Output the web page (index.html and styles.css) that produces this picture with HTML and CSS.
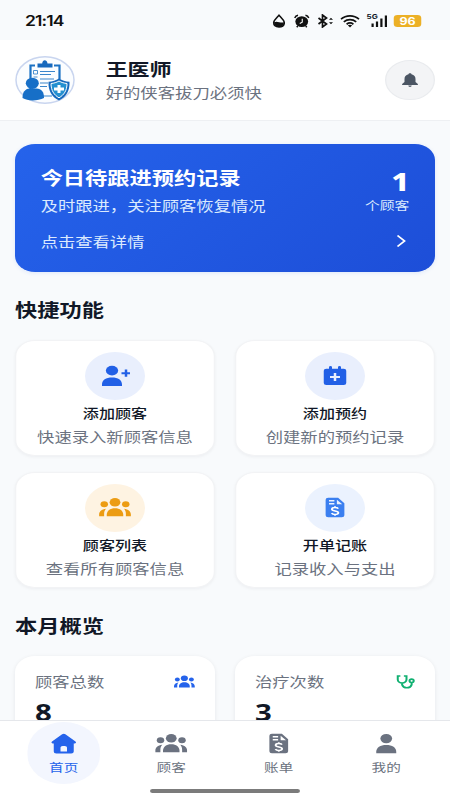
FILE: index.html
```html
<!DOCTYPE html>
<html lang="zh-CN">
<head>
<meta charset="utf-8">
<title>首页</title>
<link rel="stylesheet" href="styles.css">
</head>
<body>
<svg class="defs" width="0" height="0">
  <symbol id="group" viewBox="-1 0 26 24">
    <circle cx="12" cy="6.200" r="4.300"/><circle cx="3.400" cy="8.200" r="3"/><circle cx="20.600" cy="8.200" r="3"/>
    <path d="M5.400 20.300v-1.500c0-3.800 2.600-6.500 6.600-6.500s6.600 2.700 6.600 6.500v1.500z"/>
    <path d="M-.7 20.300v-1.800c0-3.100 1.900-5.400 5.500-5.800-1.200 1.500-1.500 3.200-1.500 5.400v2.200zM24.700 20.300v-1.800c0-3.100-1.900-5.400-5.500-5.800 1.200 1.500 1.500 3.200 1.500 5.400v2.200z"/>
  </symbol>
  <symbol id="bill" viewBox="0 0 24 24">
    <path fill-rule="evenodd" d="M6.500 1.800h8L19.500 7.300v11.900a2 2 0 0 1-2 2h-11a2 2 0 0 1-2-2V3.800a2 2 0 0 1 2-2zM7.200 4v1.500h4.300V4zM7.200 7.100v1.500h4.300V7.100zM13.500 3.800v4.500h4.300z"/>
    <path class="cut" d="M14.600 12.600c-.6-.9-1.500-1.100-2.600-1.100-1.500 0-2.500.6-2.500 1.700 0 2.500 5.200 1.100 5.200 3.600 0 1.100-1.100 1.700-2.700 1.700-1.200 0-2.200-.4-2.700-1.300M12 10.200v1.600M12 18.200v1.600"/>
  </symbol>
</svg>
<div class="phone">
  <div class="status">
    <span class="clock">21:14</span>
    <div class="status-icons">
      <svg class="drop" style="--w:13" viewBox="0 0 13 14" preserveAspectRatio="none"><path d="M6.500 1.200C4 4 1.200 6.300 1.200 8.600c0 2.700 2.300 4.300 5.300 4.300s5.300-1.600 5.300-4.300C11.800 6.300 9 4 6.500 1.200z" fill="none" stroke="#111" stroke-width="1.600"/><path d="M1.500 8.300c3-1.800 6 .9 10 0 0 3-2 4.500-5 4.500s-5-1.500-5-4.500z"/></svg>
      <svg style="--w:16" viewBox="0 0 16 14" preserveAspectRatio="none"><ellipse cx="8" cy="7.600" rx="6.400" ry="5.400"/><path d="M1 4c.5-1.500 1.700-2.500 3.300-2.800M15 4c-.5-1.500-1.700-2.500-3.300-2.800M4 12l-1 1.300M12 12l1 1.300" stroke="#111" stroke-width="1.500" fill="none"/><path d="M8.500 4.800v3.400L6 9.500" stroke="#fff" stroke-width="1.100" fill="none"/></svg>
      <svg style="--w:16" viewBox="0 0 16 14" preserveAspectRatio="none"><path d="M1 4l8 6-4 3V1l4 3-8 6" fill="none" stroke="#111" stroke-width="1.700"/><path d="M11.500 5.800l2-2 2 2zM11.500 8.200l2 2 2-2z"/></svg>
      <svg style="--w:20" viewBox="0 0 20 14" preserveAspectRatio="none"><path d="M1 5.200c5-4.400 13-4.400 18 0M3.800 7.800c3.600-3 8.800-3 12.400 0M6.600 10.200c2-1.500 4.800-1.500 6.800 0" fill="none" stroke="#111" stroke-width="1.700"/><path d="M7.800 11.300q2.200-1 4.400 0L10 13.400z"/></svg>
      <div class="signal"><span>5G</span><svg style="--w:20" viewBox="0 0 20 14" preserveAspectRatio="none"><path d="M4 9.500h2.200V13H4zM8.400 7.500h2.200V13H8.400zM12.800 4.500H15V13h-2.200zM17.300 1.500h2.200V13h-2.200z"/></svg></div>
      <div class="battery">96</div>
    </div>
  </div>

  <header class="header">
    <svg class="avatar" viewBox="0 0 60 48" preserveAspectRatio="none">
      <ellipse cx="30" cy="24" rx="29" ry="23.200" fill="#fbfdff" stroke="#c9d5ef" stroke-width="1.500"/>
      <path d="M20 9.500h-4.500v28M39 9.500h5.500v14" fill="none" stroke="#1c72c4" stroke-width="2.200"/>
      <path d="M22.500 11.500V7.500h4.700C27.500 3.300 32 3.300 32.500 7.500h5v4z" fill="#1769bd"/>
      <path d="M25 15.500h15M25 18.500h11M25 23h14M25 27h8M25 30.500h7M27 40h10" stroke="#3a86cc" stroke-width="1.100"/>
      <path d="M18.500 14.500h4v3.500h-4zM18.500 21h4" fill="none" stroke="#3a86cc" stroke-width=".9"/>
      <ellipse cx="17.300" cy="27.300" rx="6.500" ry="5.600" fill="#176fc7"/>
      <path d="M7.500 42c0-6 2.500-9 7-9.500h7c5 .5 7.500 3 7.500 9.500-6 3-16 3.500-21.500 0z" fill="#176fc7"/>
      <path d="M44 22.500c3 2 6.500 3 10.500 3.200C55 35 51 41 44 44.500 37 41 33 35 33.500 25.700 37.500 25.500 41 24.500 44 22.500z" fill="#1769bd"/>
      <path d="M44 25c2.500 1.500 5 2.200 8 2.500 0 7-3 11.500-8 14.300-5-2.800-8-7.300-8-14.300 3-.3 5.500-1 8-2.500z" fill="#2590d0" stroke="#fff" stroke-width="1"/>
      <path d="M42.500 29h3v2.500H49v3h-3.500V37h-3v-2.500H39v-3h3.500z" fill="#fff"/>
    </svg>
    <div class="who">
      <div class="name">王医师</div>
      <div class="motto">好的侠客拔刀必须快</div>
    </div>
    <div class="bell"><svg viewBox="0 0 16 16"><path d="M8 1.200c-.8 0-1.200.5-1.200 1C4.600 2.800 3.600 4.500 3.600 7v3L1.700 12v.9h12.600V12l-1.900-2V7c0-2.500-1-4.200-3.200-4.800 0-.5-.4-1-1.200-1zM6.600 13.500a1.400 1.400 0 0 0 2.800 0z"/></svg></div>
  </header>

  <main class="content">
    <section class="hero">
      <div class="hero-top">
        <div>
          <div class="hero-title">今日待跟进预约记录</div>
          <div class="hero-sub">及时跟进，关注顾客恢复情况</div>
        </div>
        <div class="hero-count"><div class="num">1</div><div class="unit">个顾客</div></div>
      </div>
      <div class="hero-link"><span>点击查看详情</span><svg viewBox="0 0 8 14"><path d="M1 1.500L6.600 7 1 12.500"/></svg></div>
    </section>

    <h2>快捷功能</h2>
    <div class="grid">
      <div class="card">
        <div class="disc blue"><svg viewBox="0 0 24 24"><circle cx="9.600" cy="6.600" r="4.900"/><path d="M1.600 22v-1.600c0-4.400 3.200-7 8-7s8 2.600 8 7V22zM19.800 5.600h2v2.600h2.600v2h-2.600v2.600h-2v-2.600h-2.600v-2h2.600z"/></svg></div>
        <div class="card-title">添加顾客</div><div class="card-desc">快速录入新顾客信息</div>
      </div>
      <div class="card">
        <div class="disc blue"><svg viewBox="0 0 24 24"><path fill-rule="evenodd" d="M5 4.700h2.200V3.300a1.200 1.200 0 0 1 2.400 0v1.400h4.800V3.300a1.200 1.200 0 0 1 2.400 0v1.400H19a2 2 0 0 1 2 2V19a2 2 0 0 1-2 2H5a2 2 0 0 1-2-2V6.700a2 2 0 0 1 2-2zM11 9v3H8v2h3v3h2v-3h3v-2h-3V9z"/></svg></div>
        <div class="card-title">添加预约</div><div class="card-desc">创建新的预约记录</div>
      </div>
      <div class="card">
        <div class="disc orange"><svg class="wide"><use href="#group"/></svg></div>
        <div class="card-title">顾客列表</div><div class="card-desc">查看所有顾客信息</div>
      </div>
      <div class="card">
        <div class="disc sky"><svg><use href="#bill"/></svg></div>
        <div class="card-title">开单记账</div><div class="card-desc">记录收入与支出</div>
      </div>
    </div>

    <h2>本月概览</h2>
    <div class="grid">
      <div class="stat">
        <div class="stat-head"><span>顾客总数</span><svg class="mini-group"><use href="#group"/></svg></div>
        <div class="stat-num">8</div>
      </div>
      <div class="stat">
        <div class="stat-head"><span>治疗次数</span><svg class="steth" viewBox="0 0 16 16"><path d="M4.300 2H2.200v3.500a3.500 3.500 0 0 0 7 0V2H7.100M5.700 9v1.800a3.900 3.900 0 0 0 7.600 0V8.700"/><circle cx="13.300" cy="6.800" r="1.700"/></svg></div>
        <div class="stat-num">3</div>
      </div>
    </div>
  </main>

  <nav class="nav">
    <div class="tabs">
      <div class="tab active"><svg viewBox="0 0 24 24"><path fill-rule="evenodd" d="M12 1.800c.5 0 .9.200 1.300.5l8.100 7.200c.8.800.4 1.900-.7 1.900H20v8a2 2 0 0 1-2 2H6a2 2 0 0 1-2-2v-8h-.7c-1.100 0-1.500-1.100-.7-1.900l8.100-7.200c.4-.3.800-.5 1.300-.5zM9.400 19.600h5.200v-4a1.700 1.700 0 0 0-1.700-1.700h-1.800a1.700 1.700 0 0 0-1.700 1.700z"/></svg><span>首页</span></div>
      <div class="tab"><svg class="wide"><use href="#group"/></svg><span>顾客</span></div>
      <div class="tab"><svg><use href="#bill"/></svg><span>账单</span></div>
      <div class="tab"><svg viewBox="0 0 24 24"><circle cx="12" cy="6.600" r="4.700"/><path d="M4 21.300v-1.500c0-4.200 3.200-6.700 8-6.700s8 2.500 8 6.700v1.500z"/></svg><span>我的</span></div>
    </div>
    <div class="home-bar"></div>
  </nav>
</div>
</body>
</html>
```
FILE: styles.css
```css
* { box-sizing: border-box; }
html, body { margin: 0; height: 800px; overflow: hidden; background: #f8fafc; }
.defs { position: absolute; }

/* 360-unit-wide layout stretched to the full 450px width */
.phone {
  width: 360px; height: 800px; overflow: hidden;
  display: flex; flex-direction: column;
  transform: scaleX(1.25); transform-origin: 0 0;
  font-family: "Noto Sans CJK SC", "Noto Sans", sans-serif;
  color: #111827;
}

.status { flex: none; height: 40px; padding: 1px 23px 0 20px; display: flex; align-items: center; justify-content: space-between; }
.clock { font: 600 14px/20px Inter, sans-serif; letter-spacing: -0.700px; color: #111; }
.status-icons { display: flex; align-items: center; gap: 5.800px; fill: #111; }
.status-icons svg { display: block; width: calc(var(--w) * 0.8px); height: 14px; }
.status-icons .drop { margin-right: 1.500px; }
.signal { position: relative; }
.signal span { position: absolute; left: -1px; top: -1px; font: 700 6.500px/8px Inter, sans-serif; }
.battery { width: 22px; height: 12px; border-radius: 3px; background: #ecb026; color: #fff; font: 700 10px/12px Inter, sans-serif; text-align: center; margin-left: -1px; }

.header { flex: none; height: 81px; padding: 0 12px; background: #fff; border-bottom: 1px solid #eef0f3; display: flex; align-items: center; }
.avatar { width: 48px; height: 48px; }
.who { flex: 1; margin-left: 24.500px; }
.name { font-size: 17.600px; line-height: 24px; font-weight: 600; position: relative; top: 1px; }
.motto { font-size: 13.900px; line-height: 24px; color: #6b7280; }
.bell { width: 40px; height: 40px; border-radius: 50%; background: #f3f4f6; border: 1px solid #e9ebee; display: grid; place-items: center; }
.bell svg { width: 16px; height: 16px; fill: #4b5563; }

.content { flex: 1; min-height: 0; overflow: hidden; padding: 23px 12px 0; }
.hero { height: 128px; border-radius: 16px; padding: 20px 20.500px 0; color: #fff; background: linear-gradient(135deg, #2563eb, #1d4ed8); box-shadow: 0 1px 4px rgba(37, 99, 235, .12); }
.hero-top { display: flex; justify-content: space-between; height: 63px; }
.hero-title { font-size: 17.800px; line-height: 27px; font-weight: 600; }
.hero-sub { font-size: 13.850px; line-height: 28px; color: #dbeafe; }
.hero-count { text-align: right; }
.num { font: 800 25px/34px "Noto Sans", sans-serif; }
.unit { font-size: 11.850px; line-height: 18px; margin-top: -2px; color: #dbeafe; }
.hero-link { display: flex; justify-content: space-between; align-items: center; font-size: 13.850px; line-height: 28px; color: #dbeafe; padding-right: 3px; }
.hero-link svg { width: 8px; height: 14px; fill: none; stroke: #fff; stroke-width: 1.600; }

h2 { margin: 24px 0 17px; font-size: 17.800px; line-height: 27px; font-weight: 600; }
.grid { display: grid; grid-template-columns: 1fr 1fr; gap: 16px; }
.card { height: 116px; border-radius: 16px; background: #fff; border: 1px solid #f2f3f5; box-shadow: 0 1px 3px rgba(15, 23, 42, .05); padding-top: 11px; display: flex; flex-direction: column; align-items: center; }
.disc { width: 48px; height: 48px; border-radius: 50%; display: grid; place-items: center; }
.disc svg, .tab svg { width: 24px; height: 24px; display: block; }
.disc svg.wide, .tab svg.wide { width: 26px; }
.blue { background: #e9effd; fill: #2260e6; }
.orange { background: #fef3e2; fill: #ec9c13; }
.sky { background: #ebf2fe; fill: #3b7ff0; }
.cut { fill: none; stroke: #fff; stroke-width: 1.500; }
.card-title { font-size: 12.850px; line-height: 22px; margin-top: 2px; font-weight: 500; }
.card-desc { font-size: 13.850px; line-height: 24px; color: #6b7280; white-space: nowrap; }

.stat { height: 110px; border-radius: 16px; background: #fff; box-shadow: 0 1px 4px rgba(15, 23, 42, .08); padding: 13px 16px 0; }
.stat-head { display: flex; justify-content: space-between; align-items: center; font-size: 13.850px; line-height: 24px; color: #6b7280; }
.mini-group { width: 17px; height: 16px; margin-top: 2px; fill: #2563eb; }
.steth { width: 16px; height: 16px; margin-top: 1px; fill: none; stroke: #10b071; stroke-width: 1.600; }
.stat-num { font: 700 23.500px/30px "Noto Sans", sans-serif; margin-top: 4px; }

.nav { flex: none; height: 80px; background: #fff; border-top: 1px solid #e5e7eb; padding: 1px 8px 0; }
.tabs { display: flex; justify-content: space-around; height: 67px; }
.tab { width: 57.600px; height: 62px; border-radius: 29px; padding-top: 10px; display: flex; flex-direction: column; align-items: center; font-size: 11.700px; line-height: 22px; color: #6b7280; fill: #6b7280; }
.tab.active { background: #f3f6fe; color: #2563eb; fill: #2563eb; }
.home-bar { width: 120px; height: 4px; border-radius: 2px; background: #7b7b7b; margin: 0 auto; }
```
